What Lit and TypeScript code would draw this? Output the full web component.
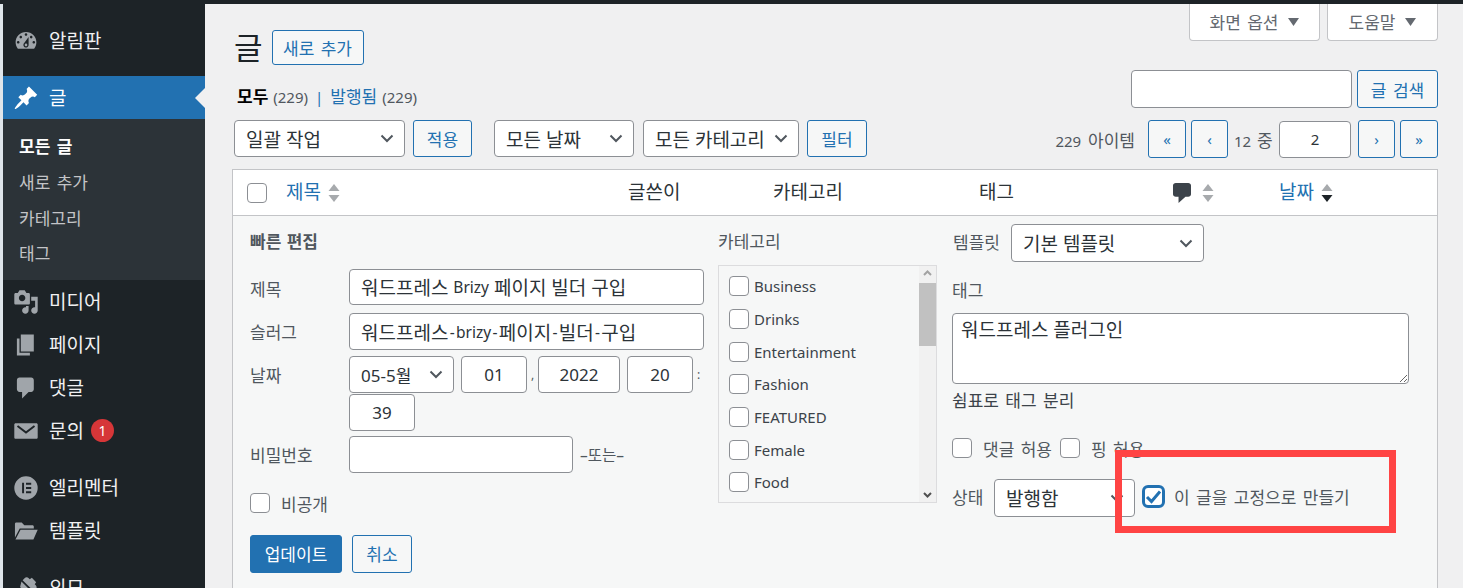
import { LitElement, html, css, svg } from "lit";
import { customElement } from "lit/decorators.js";

const P: Record<string, string> = {
  dash: "M3.76 16h12.48c1.1-1.37 1.76-3.11 1.76-5 0-4.42-3.58-8-8-8s-8 3.58-8 8c0 1.89.66 3.63 1.76 5zM10 4c.55 0 1 .45 1 1s-.45 1-1 1-1-.45-1-1 .45-1 1-1zM6 6c.55 0 1 .45 1 1s-.45 1-1 1-1-.45-1-1 .45-1 1-1zm8 0c.55 0 1 .45 1 1s-.45 1-1 1-1-.45-1-1 .45-1 1-1zm-5.37 5.55L12 7v6c0 1.1-.9 2-2 2s-2-.9-2-2c0-.57.24-1.08.63-1.45zM4 10c.55 0 1 .45 1 1s-.45 1-1 1-1-.45-1-1 .45-1 1-1zm12 0c.55 0 1 .45 1 1s-.45 1-1 1-1-.45-1-1 .45-1 1-1zm-5 3c0-.55-.45-1-1-1s-1 .45-1 1 .45 1 1 1 1-.45 1-1z",
  pin: "M10.44 3.02l1.82-1.82 6.36 6.35-1.83 1.82c-1.05-.68-2.48-.57-3.41.36l-.75.75c-.92.93-1.04 2.35-.35 3.41l-1.83 1.82-2.41-2.41-2.8 2.79c-.42.42-3.38 2.71-3.8 2.29s1.86-3.39 2.28-3.81l2.79-2.79L4.1 9.36l1.83-1.82c1.05.69 2.48.57 3.4-.36l.75-.75c.93-.92 1.05-2.35.36-3.41z",
  media: "M13 11V4c0-.55-.45-1-1-1h-1.67L9 1H5L3.67 3H2c-.55 0-1 .45-1 1v7c0 .55.45 1 1 1h10c.55 0 1-.45 1-1zM7 4.5c1.38 0 2.5 1.12 2.5 2.5S8.38 9.5 7 9.5 4.5 8.38 4.5 7 5.62 4.5 7 4.5zM14 6h5v10.5c0 1.38-1.12 2.5-2.5 2.5S14 17.88 14 16.5s1.12-2.5 2.5-2.5c.17 0 .34.02.5.05V9h-3V6zm-4 8.05V13h2v3.5c0 1.38-1.12 2.5-2.5 2.5S7 17.88 7 16.5 8.12 14 9.5 14c.17 0 .34.02.5.05z",
  page: "M6 15V2h10v13H6zm-1 1h8v2H3V5h2v11z",
  comment: "M5 2h9c1.1 0 2 .9 2 2v7c0 1.1-.9 2-2 2h-2l-5 5v-5H5c-1.1 0-2-.9-2-2V4c0-1.1.9-2 2-2z",
  mail: "M2 4h16c.55 0 1 .45 1 1v10c0 .55-.45 1-1 1H2c-.55 0-1-.45-1-1V5c0-.55.45-1 1-1zm8 8.2l7-5.4-.9-1.2L10 10.2 3.9 5.6 3 6.8z",
  elementor: "M10 1a9 9 0 1 0 0 18 9 9 0 0 0 0-18zM7 6h1.5v8H7zm3 0h4v1.5h-4zm0 3.25h4v1.5h-4zM10 12.5h4V14h-4z",
  folder: "M1.5 4.5c0-.55.45-1 1-1h4.2l2 2h6.3c.55 0 1 .45 1 1V8H5.2L1.5 15zM5.8 9H19l-3.3 7.5H1.9z",
  brush: "M14.5 11 7.4 4l1.5-1.5c.9-.9 2.3-.9 3.2 0l.8.8 1.6-1.1 3.3 3.3-1.1 1.6.8.8c.9.9.9 2.3 0 3.2zM6.5 5l7.5 7.5-2.5 2.5-2-1-1 4-6-6 4-1-1-2z",
};

const icon = (name: string) => html`<svg class="ico" viewBox="0 0 20 20"><path fill-rule="evenodd" d=${P[name]}></path></svg>`;
const chevron = html`<svg class="chev" viewBox="0 0 14 9"><path d="M1.5 1.5 7 7l5.5-5.5" fill="none" stroke="#50575e" stroke-width="2"></path></svg>`;
const sort = (active = false) => html`<svg class="sort" viewBox="0 0 12 20">
  ${svg`<path d="M6 1l5.5 7H.5z" fill="#a7aaad"></path><path d="M.5 12h11L6 19z" fill=${active ? "#1d2327" : "#a7aaad"}></path>`}
</svg>`;
const tri = html`<svg class="tri" viewBox="0 0 11 8"><path d="M0 0h11L5.5 8z" fill="#646970"></path></svg>`;

const CATS = ["Business", "Drinks", "Entertainment", "Fashion", "FEATURED", "Female", "Food"];

@customElement("app-root")
export class AppRoot extends LitElement {
  static styles = css`
    :host {
      display: block;
      height: 588px;
      overflow: hidden;
      position: relative;
      font-family: "Noto Sans", "Noto Sans CJK KR", sans-serif;
      font-size: 17px;
      color: #3c434a;
      background: #f0f0f1;
    }
    * { box-sizing: border-box; }
    .topbar { height: 4px; background: #1d2327; }
    .shell { display: flex; height: 584px; }
    .strip { width: 3px; background: #dfe5ea; flex: none; }

    .side { width: 202px; flex: none; background: #1d2327; padding-top: 15px; color: #f0f0f1; }
    .item { height: 43px; display: flex; align-items: center; padding-left: 10px; gap: 10px; font-size: 19px; position: relative; white-space: nowrap; }
    .item .t { margin-top: -2px; }
    .ico { width: 26px; height: 26px; fill: #a0a5aa; flex: none; }
    .item.on { background: #2271b1; color: #fff; margin-top: 14px; }
    .item.on .ico { fill: #fff; }
    .item.sep { margin-top: 14px; }
    .arrow { position: absolute; right: 0; top: 12px; width: 0; height: 0; border: 10px solid transparent; border-right-color: #f0f0f1; border-left-width: 0; }
    .sub { background: #2c3338; height: 161px; padding: 10px 0 0 16px; }
    .sub div { height: 35.7px; display: flex; align-items: center; font-size: 17px; color: #c3c4c7; word-spacing: 2px; padding-bottom: 2px; }
    .sub div.cur { color: #fff; font-weight: 700; }
    .badge { width: 23px; height: 23px; border-radius: 50%; background: #d63638; color: #fff; font-size: 14px; display: flex; align-items: center; justify-content: center; margin-left: -3px; }

    .main { flex: 1; padding: 0 25px 0 27px; min-width: 0; }
    .head { display: flex; justify-content: space-between; height: 66px; }
    .title { display: flex; align-items: center; gap: 9px; padding: 26px 0 0 2px; height: 61px; }
    .title h1 { margin: 0; font-weight: 400; font-size: 31px; color: #1d2327; line-height: 35px; }
    .tabs { display: flex; gap: 7px; height: 37px; }
    .tab { background: #fff; border: 1px solid #c3c4c7; border-top: 0; border-radius: 0 0 4px 4px; display: flex; align-items: center; justify-content: center; gap: 10px; font-size: 17px; color: #646970; word-spacing: 2px; padding-bottom: 1px; }
    .tab.a { width: 131px; }
    .tab.b { width: 111px; }
    .tri { width: 11px; height: 8px; }

    .btn { display: inline-flex; align-items: center; justify-content: center; flex: none; border: 1px solid #2271b1; color: #2271b1; background: #f6f7f7; border-radius: 3px; font-size: 17px; word-spacing: 2px; white-space: nowrap; }
    .btn.new { width: 92px; height: 35px; }

    .row2 { display: flex; justify-content: space-between; height: 38px; }
    .subsub { padding: 17px 0 0 5px; font-size: 15px; color: #50575e; line-height: 20px; display: flex; gap: 5px; }
    .subsub b { color: #000; font-size: 17px; }
    .subsub a { color: #2271b1; font-size: 17px; }
    .subsub .bar { color: #2271b1; margin: 0 2px; }
    .search { display: flex; gap: 5px; }
    .search input { width: 221px; height: 38px; }
    .search .btn { width: 81px; }

    .txt { display: block; height: 37px; border: 1px solid #8c8f94; border-radius: 4px; background: #fff; padding: 0 11px; font: inherit; font-size: 17px; color: #2c3338; outline: 0; margin: 0; }
    .ctr { text-align: center; padding: 0; }
    div.txt { display: flex; align-items: center; font-size: 19px; white-space: pre; }
    .lat { font-size: 15.5px; }
    .hy { font-size: 15.5px; padding: 0 1.3px; }
    .sel { display: flex; align-items: center; justify-content: space-between; height: 37px; flex: none; border: 1px solid #8c8f94; border-radius: 4px; background: #fff; padding: 0 10px 0 11px; font-size: 19px; color: #2c3338; white-space: nowrap; position: relative; }
    .chev { width: 14px; height: 9px; flex: none; }

    .tools { display: flex; align-items: flex-start; margin-top: 12px; padding-left: 2px; height: 38px; }
    .tools .btn { height: 37px; }
    .w171 { width: 171px; }
    .w140 { width: 140px; margin-left: 22px; }
    .w156 { width: 156px; margin-left: 9px; }
    .apply { width: 59px; margin-left: 8px; }
    .filter { width: 60px; margin-left: 8px; }
    .pager { margin-left: auto; display: flex; align-items: center; height: 38px; font-size: 15px; color: #50575e; }
    .pager .tools-t { font-size: 17px; }
    .pager .btn { height: 38px; font-size: 15px; width: 38px; }
    .pager .btn.n { width: 37px; }
    .pager .count { margin-right: 13px; white-space: nowrap; word-spacing: 3px; }
    .pager .of { width: 39px; margin: 0 6px; white-space: nowrap; word-spacing: 2px; }
    .pager input { width: 72px; height: 37px; font-size: 15px; margin-right: 7px; }
    .pager .g5 { margin-left: 5px; }

    .table { margin-top: 11px; border: 1px solid #c3c4c7; border-bottom: 0; height: 420px; background: #f6f7f7; }
    .thead { display: grid; grid-template-columns: 53px 342px 145px 206px 194px 106px 1fr; height: 46px; border-bottom: 1px solid #c3c4c7; background: #fff; font-size: 19px; color: #2c3338; align-items: center; }
    .thead .c { display: flex; align-items: center; gap: 7px; white-space: nowrap; }
    .thead .c .t { margin-top: -3px; }
    .thead .link { color: #2271b1; }
    .thead .cb { padding-left: 14px; }
    .sort { width: 12px; height: 20px; flex: none; }
    .cico { width: 18px; height: 20px; fill: #3c434a; }
    .thead .c.cm { gap: 11px; }

    .box { width: 20px; height: 20px; flex: none; display: block; border: 1px solid #8c8f94; border-radius: 4px; background: #fff; }

    .qe { display: grid; grid-template-columns: 454px 219px 457px; column-gap: 14px; padding-left: 17px; font-size: 17px; color: #50575e; }
    .left .ttl { height: 53px; padding-top: 14px; line-height: 24px; font-weight: 700; font-size: 17px; word-spacing: 1px; }
    .field { display: flex; align-items: center; }
    .field > label { width: 99px; flex: none; }
    .field .wide { width: 355px; }
    .f1 .txt { height: 36px; }
    .f1 label { padding-top: 2px; }
    .f2 { margin-top: 8px; }
    .f3 { margin-top: 6px; align-items: flex-start; }
    .f3 > label { padding-top: 6px; }
    .date { display: flex; flex-direction: column; gap: 1px; }
    .date .r { display: flex; align-items: center; }
    .date .sel { width: 105px; margin-right: 7px; font-size: 17px; }
    .date input { width: 66px; }
    .date input.y { width: 82px; margin-right: 7px; }
    .date .comma { width: 11px; text-align: center; font-size: 12px; }
    .f4 { margin-top: 5px; }
    .f4 input { width: 224px; }
    .f4 span { margin-left: 7px; font-size: 15.5px; white-space: nowrap; }
    .priv { display: flex; align-items: center; gap: 11px; margin-top: 20px; height: 20px; }
    .acts { display: flex; gap: 10px; margin-top: 22px; }
    .acts .btn { height: 38px; padding-bottom: 2px; }
    .upd { width: 92px; background: #2271b1; color: #fff; }
    .cancel { width: 60px; }

    .mid .lbl { height: 49px; padding-top: 14px; line-height: 24px; }
    .cats { height: 238px; width: 219px; border: 1px solid #dcdcde; display: flex; justify-content: space-between; }
    .list { padding: 4px 0 0 10px; }
    .cat { height: 32.7px; display: flex; align-items: center; gap: 5px; font-size: 15px; color: #3c434a; }
    .bar2 { width: 17px; background: #f1f1f1; display: flex; flex-direction: column; justify-content: space-between; align-items: center; position: relative; padding: 4px 0; }
    .thumb { position: absolute; top: 17px; left: 0; width: 17px; height: 63px; background: #c1c1c1; }
    .bar2 svg { width: 9px; height: 6px; }

    .right { padding-left: 1px; }
    .tpl { display: flex; align-items: center; margin-top: 8px; padding-left: 1px; }
    .tpl label { width: 58px; flex: none; padding-bottom: 4px; }
    .tpl .sel { width: 193px; height: 38px; }
    .lab2 { margin-top: 17px; height: 24px; line-height: 24px; }
    textarea { display: block; margin: 10px 0 0; width: 457px; height: 71px; border: 1px solid #8c8f94; border-radius: 4px; background: #fff; padding: 4px 8px 0; font: inherit; font-size: 19px; color: #2c3338; outline: 0; line-height: 24px; }
    .hint { height: 24px; line-height: 24px; margin-top: 5px; color: #3c434a; word-spacing: 2px; }
    .checks { display: flex; align-items: center; margin-top: 25px; height: 20px; }
    .checks span { margin: 0 8px 0 11px; white-space: nowrap; word-spacing: 2px; }
    .state { display: flex; align-items: center; margin-top: 21px; }
    .state label { width: 42px; flex: none; padding-bottom: 4px; }
    .state .sel { width: 141px; height: 38px; }
    .sticky { width: 23px; height: 23px; margin: 0 9px 4px 7px; flex: none; border: 3px solid #2271b1; border-radius: 6px; background: #fff; display: flex; align-items: center; justify-content: center; }
    .sticky svg { width: 17px; height: 15px; }
    .sticky-t { font-size: 17px; white-space: nowrap; word-spacing: 2px; padding-bottom: 4px; }

    .red { position: absolute; left: 1115px; top: 450px; width: 281px; height: 83px; border: 7px solid #ff4444; pointer-events: none; }
  `;

  render() {
    return html`
      <div class="topbar"></div>
      <div class="shell">
        <div class="strip"></div>
        <nav class="side">
          <div class="item">${icon("dash")}<span class="t">알림판</span></div>
          <div class="item on">${icon("pin")}<span class="t">글</span><span class="arrow"></span></div>
          <div class="sub">
            <div class="cur">모든 글</div><div>새로 추가</div><div>카테고리</div><div>태그</div>
          </div>
          <div class="item">${icon("media")}<span class="t">미디어</span></div>
          <div class="item">${icon("page")}<span class="t">페이지</span></div>
          <div class="item">${icon("comment")}<span class="t">댓글</span></div>
          <div class="item">${icon("mail")}<span class="t">문의</span><span class="badge">1</span></div>
          <div class="item sep">${icon("elementor")}<span class="t">엘리멘터</span></div>
          <div class="item">${icon("folder")}<span class="t">템플릿</span></div>
          <div class="item sep">${icon("brush")}<span class="t">외모</span></div>
        </nav>
        <main class="main">
          <div class="head">
            <div class="title"><h1>글</h1><span class="btn new">새로 추가</span></div>
            <div class="tabs">
              <div class="tab a">화면 옵션 ${tri}</div>
              <div class="tab b">도움말 ${tri}</div>
            </div>
          </div>
          <div class="row2">
            <div class="subsub"><b>모두</b> (229) <span class="bar">|</span> <a>발행됨</a> (229)</div>
            <div class="search"><input class="txt" /><span class="btn">글 검색</span></div>
          </div>
          <div class="tools">
            <div class="sel w171">일괄 작업 ${chevron}</div>
            <span class="btn apply">적용</span>
            <div class="sel w140">모든 날짜 ${chevron}</div>
            <div class="sel w156">모든 카테고리 ${chevron}</div>
            <span class="btn filter">필터</span>
            <div class="pager">
              <span class="count">229 <span class="tools-t">아이템</span></span>
              <span class="btn">«</span>
              <span class="btn n g5">‹</span>
              <span class="of">12 <span class="tools-t">중</span></span>
              <input class="txt ctr" .value=${"2"} />
              <span class="btn n">›</span>
              <span class="btn g5">»</span>
            </div>
          </div>
          <div class="table">
            <div class="thead">
              <div class="cb"><span class="box"></span></div>
              <div class="c link"><span class="t">제목</span> ${sort()}</div>
              <div class="c"><span class="t">글쓴이</span></div>
              <div class="c"><span class="t">카테고리</span></div>
              <div class="c"><span class="t">태그</span></div>
              <div class="c cm"><svg class="cico" viewBox="3 2 13 16" preserveAspectRatio="none"><path d=${P.comment}></path></svg>${sort()}</div>
              <div class="c link"><span class="t">날짜</span> ${sort(true)}</div>
            </div>
            <div class="qe">
              <div class="left">
                <div class="ttl">빠른 편집</div>
                <div class="field f1"><label>제목</label><div class="txt wide">워드프레스 <span class="lat">Brizy</span> 페이지 빌더 구입</div></div>
                <div class="field f2"><label>슬러그</label><div class="txt wide">워드프레스<span class="hy">-</span><span class="lat">brizy</span><span class="hy">-</span>페이지<span class="hy">-</span>빌더<span class="hy">-</span>구입</div></div>
                <div class="field f3">
                  <label>날짜</label>
                  <div class="date">
                    <div class="r">
                      <div class="sel">05-5월 ${chevron}</div>
                      <input class="txt ctr" .value=${"01"} /><span class="comma">,</span>
                      <input class="txt ctr y" .value=${"2022"} />
                      <input class="txt ctr" .value=${"20"} /><span class="comma">:</span>
                    </div>
                    <div class="r"><input class="txt ctr" .value=${"39"} /></div>
                  </div>
                </div>
                <div class="field f4"><label>비밀번호</label><input class="txt" /><span>–또는–</span></div>
                <div class="priv"><span class="box"></span>비공개</div>
                <div class="acts"><span class="btn upd">업데이트</span><span class="btn cancel">취소</span></div>
              </div>
              <div class="mid">
                <div class="lbl">카테고리</div>
                <div class="cats">
                  <div class="list">
                    ${CATS.map((c) => html`<div class="cat"><span class="box"></span>${c}</div>`)}
                  </div>
                  <div class="bar2">
                    <svg viewBox="0 0 9 6"><path d="M1 5l3.5-3.5L8 5" fill="none" stroke="#a3a3a3" stroke-width="2"></path></svg>
                    <span class="thumb"></span>
                    <svg viewBox="0 0 9 6"><path d="M1 1l3.5 3.5L8 1" fill="none" stroke="#505050" stroke-width="2"></path></svg>
                  </div>
                </div>
              </div>
              <div class="right">
                <div class="tpl"><label>템플릿</label><div class="sel">기본 템플릿 ${chevron}</div></div>
                <div class="lab2">태그</div>
                <textarea .value=${"워드프레스 플러그인"}></textarea>
                <div class="hint">쉼표로 태그 분리</div>
                <div class="checks"><i class="box"></i><span>댓글 허용</span><i class="box"></i><span>핑 허용</span></div>
                <div class="state">
                  <label>상태</label>
                  <div class="sel">발행함 ${chevron}</div>
                  <div class="sticky"><svg viewBox="0 0 17 15"><path d="M2 8l4.5 4.5L15 2.5" fill="none" stroke="#2271b1" stroke-width="3"></path></svg></div>
                  <span class="sticky-t">이 글을 고정으로 만들기</span>
                </div>
              </div>
            </div>
          </div>
        </main>
      </div>
      <div class="red"></div>
    `;
  }
}
